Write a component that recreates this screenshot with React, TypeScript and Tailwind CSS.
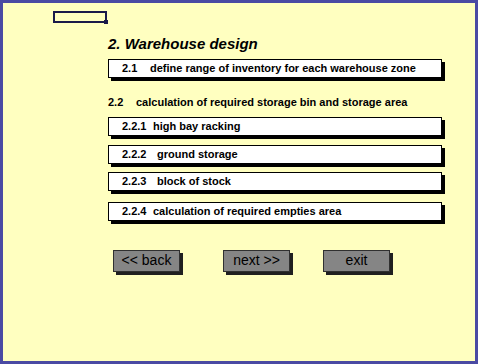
import React from 'react';

const items = [
  { num: '2.2.1', label: 'high bay racking', gap: 'mt-[6px]', col: 'w-[31px]' },
  { num: '2.2.2', label: 'ground storage', gap: 'mt-[9px]', col: 'w-[35px]' },
  { num: '2.2.3', label: 'block of stock', gap: 'mt-[8px]', col: 'w-[35px]' },
  { num: '2.2.4', label: 'calculation of required empties area', gap: 'mt-[11px]', col: 'w-[31px]' },
];

function MenuBox({ num, label, col, className = '' }: { num: string; label: string; col: string; className?: string }) {
  return (
    <div
      className={`flex h-[19px] w-[334px] items-center border border-black bg-white pl-[13px] text-[11px] font-bold text-black shadow-[3px_3px_0_#000] ${className}`}
    >
      <span className={`${col} shrink-0`}>{num}</span>
      <span>{label}</span>
    </div>
  );
}

function NavButton({ label }: { label: string }) {
  return (
    <button className="flex h-[22px] w-[67px] items-center justify-center border border-[#303030] bg-[#858585] text-[14px] text-black shadow-[3px_3px_0_#202020]">
      {label}
    </button>
  );
}

export default function App() {
  return (
    <div
      className="h-[364px] w-[478px] border-[3px] border-[#4a4aa3] bg-[#ffffc0]"
      style={{ fontFamily: '"Liberation Sans", Arial, sans-serif' }}
    >
      <div className="flex flex-col pl-[50px] pt-[8px]">
        {/* empty field marker */}
        <div className="relative h-[12px] w-[54px] border-2 border-[#1a1a4a] bg-[#ffffc0]">
          <div className="absolute -bottom-[3px] -right-[3px] h-[4px] w-[4px] bg-[#1a1a4a]" />
        </div>

        <div className="ml-[55px] flex flex-col">
          <h1 className="mt-[12px] text-[15px] font-bold italic leading-[18px] text-black">
            2. Warehouse design
          </h1>

          <MenuBox num="2.1" label="define range of inventory for each warehouse zone" col="w-[28px]" className="mt-[6px]" />

          <div className="mt-[16px] flex text-[11px] font-bold text-black">
            <span className="w-[28px]">2.2</span>
            <span>calculation of required storage bin and storage area</span>
          </div>

          {items.map((it) => (
            <MenuBox key={it.num} num={it.num} label={it.label} col={it.col} className={it.gap} />
          ))}

          <div className="mt-[29px] ml-[5px] flex">
            <NavButton label="<< back" />
            <div className="ml-[43px]">
              <NavButton label="next >>" />
            </div>
            <div className="ml-[33px]">
              <NavButton label="exit" />
            </div>
          </div>
        </div>
      </div>
    </div>
  );
}
